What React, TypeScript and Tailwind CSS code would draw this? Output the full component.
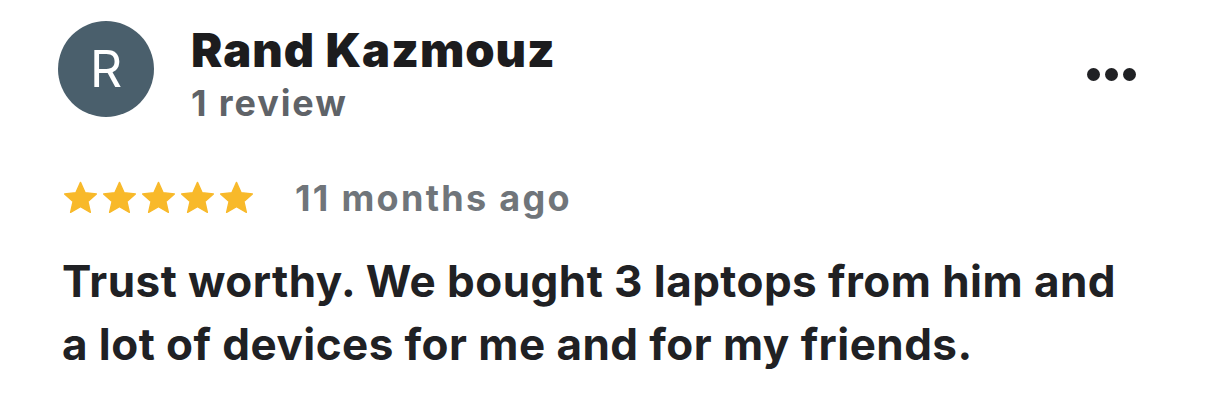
import React from "react";

function Star() {
  return (
    <svg width="37" height="36" viewBox="0 0 24 24" className="shrink-0">
      <path
        d="M12 1.6l3.1 6.9 7.5.75-5.65 5 1.66 7.35L12 17.8l-6.61 3.8 1.66-7.35-5.65-5 7.5-.75z"
        fill="#f8b92a"
        stroke="#f8b92a"
        strokeWidth="0.9"
        strokeLinejoin="round"
      />
    </svg>
  );
}

export default function App() {
  return (
    <div
      className="w-[1206px] h-[402px] bg-white overflow-hidden"
      style={{ fontFamily: "Inter, 'Liberation Sans', sans-serif" }}
    >
      <div className="flex items-start pl-[58px] pr-[70px] pt-[21px]">
        <div className="w-[96px] h-[96px] rounded-full bg-[#4a5f6c] flex items-center justify-center shrink-0">
          <span className="text-white text-[50px] font-normal leading-none">R</span>
        </div>
        <div className="ml-[37px] flex flex-col">
          <div className="text-[47px] font-black text-[#1c1c1e] leading-[48px] mt-[5px] tracking-[1px]">
            Rand Kazmouz
          </div>
          <div className="text-[36px] font-bold text-[#5f6368] leading-[40px] mt-[9px] tracking-[1.9px]">
            1 review
          </div>
        </div>
        <div className="ml-auto mt-[47px] flex gap-[5px]">
          <span className="w-[13px] h-[13px] rounded-full bg-[#202124]" />
          <span className="w-[13px] h-[13px] rounded-full bg-[#202124]" />
          <span className="w-[13px] h-[13px] rounded-full bg-[#202124]" />
        </div>
      </div>
      <div className="flex items-center pl-[62px] mt-[57px]">
        <div className="flex gap-[2px]">
          <Star />
          <Star />
          <Star />
          <Star />
          <Star />
        </div>
        <span className="ml-[40px] text-[36px] font-bold text-[#70757a] leading-none tracking-[2.3px]">
          11 months ago
        </span>
      </div>
      <div className="pl-[62px] pr-[40px] mt-[34px] text-[44px] font-bold text-[#202124] leading-[63px] tracking-[0.45px] whitespace-nowrap">
        Trust worthy. We bought 3 laptops from him and
        <br />
        a lot of devices for me and for my friends.
      </div>
    </div>
  );
}
